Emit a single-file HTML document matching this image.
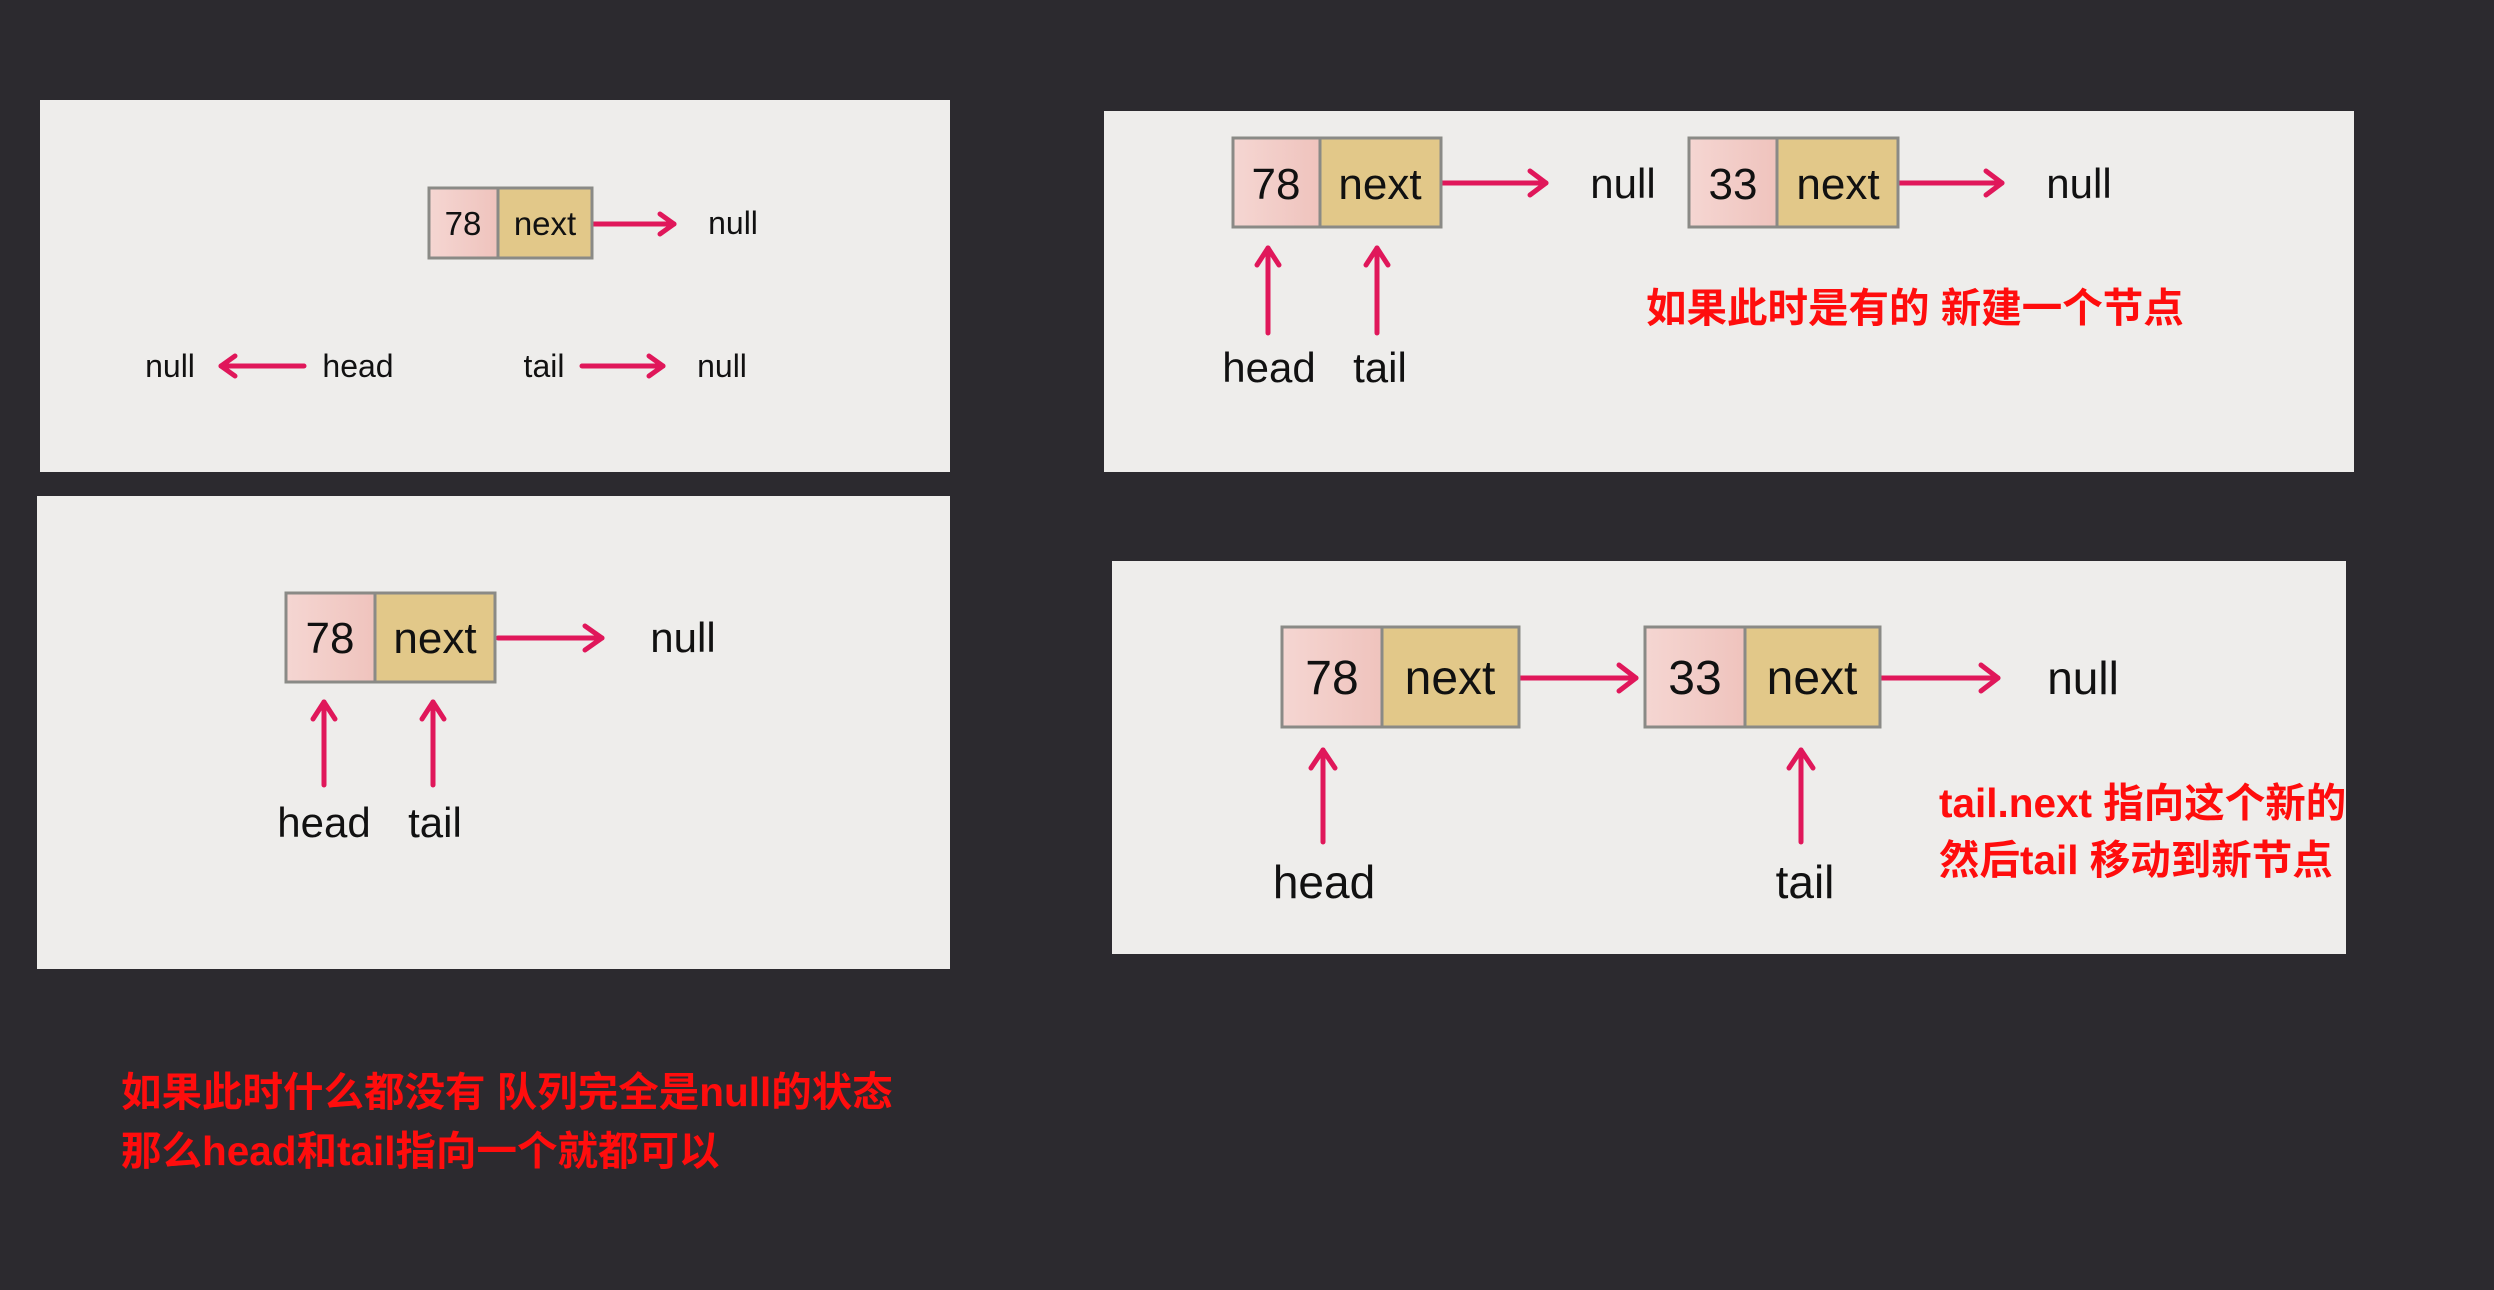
<!DOCTYPE html>
<html><head><meta charset="utf-8"><style>
html,body{margin:0;padding:0;background:#2c2a2f;width:2494px;height:1290px;overflow:hidden}
svg{display:block}
text{font-family:"Liberation Sans","Noto Sans CJK SC",sans-serif}
</style></head><body>
<svg width="2494" height="1290" viewBox="0 0 2494 1290" xmlns="http://www.w3.org/2000/svg">
<defs>
<linearGradient id="pk" x1="0" x2="1" y1="0" y2="0"><stop offset="0" stop-color="#f5d6d2"/><stop offset="1" stop-color="#efc3bd"/></linearGradient>
</defs>
<rect width="2494" height="1290" fill="#2c2a2f"/>
<rect x="40" y="100" width="910" height="372" fill="#eeedeb"/>
<rect x="37" y="496" width="913" height="473" fill="#eeedeb"/>
<rect x="1104" y="111" width="1250" height="361" fill="#eeedeb"/>
<rect x="1112" y="561" width="1234" height="393" fill="#eeedeb"/>

<g stroke="#e0175a" stroke-width="5" fill="none" stroke-linecap="round" stroke-linejoin="round">
<line x1="593" y1="224" x2="674" y2="224"/><path d="M660 214 L674 224 L660 234"/>
<line x1="304" y1="366" x2="221" y2="366"/><path d="M235 356 L221 366 L235 376"/>
<line x1="582" y1="366" x2="663" y2="366"/><path d="M649 356 L663 366 L649 376"/>
<line x1="498" y1="638" x2="602" y2="638"/><path d="M585 626 L602 638 L585 650"/>
<line x1="324" y1="785" x2="324" y2="702"/><path d="M313 719 L324 702 L335 719"/>
<line x1="433" y1="785" x2="433" y2="702"/><path d="M422 719 L433 702 L444 719"/>
<line x1="1441" y1="183" x2="1546" y2="183"/><path d="M1530 171 L1546 183 L1530 195"/>
<line x1="1898" y1="183" x2="2002" y2="183"/><path d="M1986 171 L2002 183 L1986 195"/>
<line x1="1268" y1="333" x2="1268" y2="248"/><path d="M1257 265 L1268 248 L1279 265"/>
<line x1="1377" y1="333" x2="1377" y2="248"/><path d="M1366 265 L1377 248 L1388 265"/>
<line x1="1519" y1="678" x2="1636" y2="678"/><path d="M1619 665 L1636 678 L1619 691"/>
<line x1="1880" y1="678" x2="1998" y2="678"/><path d="M1981 665 L1998 678 L1981 691"/>
<line x1="1323" y1="842" x2="1323" y2="750"/><path d="M1311 768 L1323 750 L1335 768"/>
<line x1="1801" y1="842" x2="1801" y2="750"/><path d="M1789 768 L1801 750 L1813 768"/>
</g>

<g stroke="#8a8a86" stroke-width="3">
<rect x="429" y="188" width="69" height="70" fill="url(#pk)"/><rect x="498" y="188" width="94" height="70" fill="#e2c889"/>
<rect x="286" y="593" width="89" height="89" fill="url(#pk)"/><rect x="375" y="593" width="120" height="89" fill="#e2c889"/>
<rect x="1233" y="138" width="87" height="89" fill="url(#pk)"/><rect x="1320" y="138" width="121" height="89" fill="#e2c889"/>
<rect x="1689" y="138" width="88" height="89" fill="url(#pk)"/><rect x="1777" y="138" width="121" height="89" fill="#e2c889"/>
<rect x="1282" y="627" width="100" height="100" fill="url(#pk)"/><rect x="1382" y="627" width="137" height="100" fill="#e2c889"/>
<rect x="1645" y="627" width="100" height="100" fill="url(#pk)"/><rect x="1745" y="627" width="135" height="100" fill="#e2c889"/>
</g>

<g fill="#111" text-anchor="middle">
<text x="463" y="235" font-size="33">78</text><text x="545" y="235" font-size="33">next</text>
<text x="733" y="234" font-size="32">null</text>
<text x="170" y="377" font-size="32">null</text><text x="358" y="377" font-size="32">head</text>
<text x="544" y="377" font-size="32">tail</text><text x="722" y="377" font-size="32">null</text>

<text x="330" y="653" font-size="44">78</text><text x="435" y="653" font-size="44">next</text>
<text x="683" y="652" font-size="42">null</text>
<text x="324" y="837" font-size="42">head</text><text x="435" y="837" font-size="42">tail</text>

<text x="1276" y="199" font-size="44">78</text><text x="1380" y="199" font-size="44">next</text>
<text x="1623" y="198" font-size="42">null</text>
<text x="1733" y="199" font-size="44">33</text><text x="1838" y="199" font-size="44">next</text>
<text x="2079" y="198" font-size="42">null</text>
<text x="1269" y="382" font-size="42">head</text><text x="1380" y="382" font-size="42">tail</text>

<text x="1332" y="694" font-size="48">78</text><text x="1450" y="694" font-size="48">next</text>
<text x="1695" y="694" font-size="48">33</text><text x="1812" y="694" font-size="48">next</text>
<text x="2083" y="694" font-size="46">null</text>
<text x="1324" y="898" font-size="46">head</text><text x="1805" y="898" font-size="46">tail</text>
</g>

<g fill="#ff0d0d" font-weight="bold" font-size="40.5">
<text x="1646" y="322">如果此时是有的 新建一个节点</text>
<text x="1939" y="817">tail.next 指向这个新的</text>
<text x="1939" y="874">然后tail 移动到新节点</text>
<text x="121" y="1106">如果此时什么都没有 队列完全是null的状态</text>
<text x="121" y="1165">那么head和tail指向一个就都可以</text>
</g>
</svg>
</body></html>
